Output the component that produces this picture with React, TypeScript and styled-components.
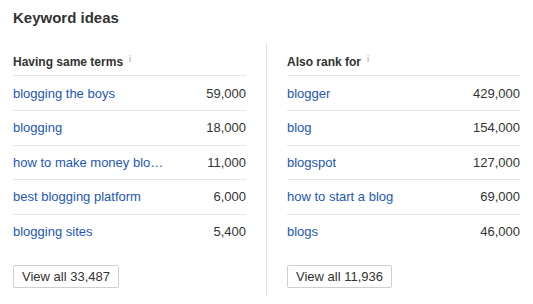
import React from 'react';
import styled, { createGlobalStyle } from 'styled-components';

const GlobalStyle = createGlobalStyle`
  html, body {
    margin: 0;
    padding: 0;
    background: #fff;
  }
  body {
    font-family: 'Liberation Sans', Arial, Helvetica, sans-serif;
    color: #333;
  }
`;

const Wrapper = styled.div`
  width: 533px;
  height: 304px;
  box-sizing: border-box;
  padding: 8px 13px 0;
  overflow: hidden;
`;

const Title = styled.h2`
  margin: 0 0 15px;
  font-size: 15px;
  line-height: 20px;
  font-weight: 700;
  color: #333;
`;

const Columns = styled.div`
  display: grid;
  grid-template-columns: 1fr 1px 1fr;
  column-gap: 20px;
`;

const Divider = styled.div`
  background: #e3e3e3;
  height: 253px;
`;

const Column = styled.section`
  display: flex;
  flex-direction: column;
  min-width: 0;
`;

const ColumnHeader = styled.div`
  height: 33px;
  box-sizing: border-box;
  padding-top: 8px;
  border-bottom: 1px solid #e8e8e8;
  font-size: 12px;
  line-height: 16px;
  font-weight: 700;
  color: #333;
`;

const Info = styled.sup`
  margin-left: 6px;
  font-size: 9px;
  font-weight: 400;
  color: #9a9a9a;
  vertical-align: 4px;
`;

const Row = styled.div<{ $first?: boolean }>`
  display: flex;
  align-items: center;
  justify-content: space-between;
  gap: 12px;
  height: ${(p) => (p.$first ? '34px' : '34.5px')};
  box-sizing: border-box;
  border-top: ${(p) => (p.$first ? 'none' : '1px solid #e8e8e8')};
  font-size: 13px;
`;

const Keyword = styled.a`
  color: #2457b5;
  text-decoration: none;
  white-space: nowrap;
  overflow: hidden;
  text-overflow: ellipsis;
`;

const Volume = styled.span`
  color: #333;
  white-space: nowrap;
`;

const ViewAll = styled.button`
  align-self: flex-start;
  margin-top: 17px;
  height: 23px;
  padding: 0 8px;
  border: 1px solid #cfcfcf;
  border-radius: 2px;
  background: #fff;
  font-family: inherit;
  font-size: 13px;
  color: #333;
  cursor: pointer;
`;

type Idea = { keyword: string; volume: string };

const sameTerms: Idea[] = [
  { keyword: 'blogging the boys', volume: '59,000' },
  { keyword: 'blogging', volume: '18,000' },
  { keyword: 'how to make money blo…', volume: '11,000' },
  { keyword: 'best blogging platform', volume: '6,000' },
  { keyword: 'blogging sites', volume: '5,400' },
];

const alsoRank: Idea[] = [
  { keyword: 'blogger', volume: '429,000' },
  { keyword: 'blog', volume: '154,000' },
  { keyword: 'blogspot', volume: '127,000' },
  { keyword: 'how to start a blog', volume: '69,000' },
  { keyword: 'blogs', volume: '46,000' },
];

function IdeaList({ title, ideas, total }: { title: string; ideas: Idea[]; total: string }) {
  return (
    <Column>
      <ColumnHeader>
        {title}
        <Info>i</Info>
      </ColumnHeader>
      {ideas.map((idea, i) => (
        <Row key={idea.keyword} $first={i === 0}>
          <Keyword href="#">{idea.keyword}</Keyword>
          <Volume>{idea.volume}</Volume>
        </Row>
      ))}
      <ViewAll>View all {total}</ViewAll>
    </Column>
  );
}

export default function App() {
  return (
    <>
      <GlobalStyle />
      <Wrapper>
        <Title>Keyword ideas</Title>
        <Columns>
          <IdeaList title="Having same terms" ideas={sameTerms} total="33,487" />
          <Divider />
          <IdeaList title="Also rank for" ideas={alsoRank} total="11,936" />
        </Columns>
      </Wrapper>
    </>
  );
}
